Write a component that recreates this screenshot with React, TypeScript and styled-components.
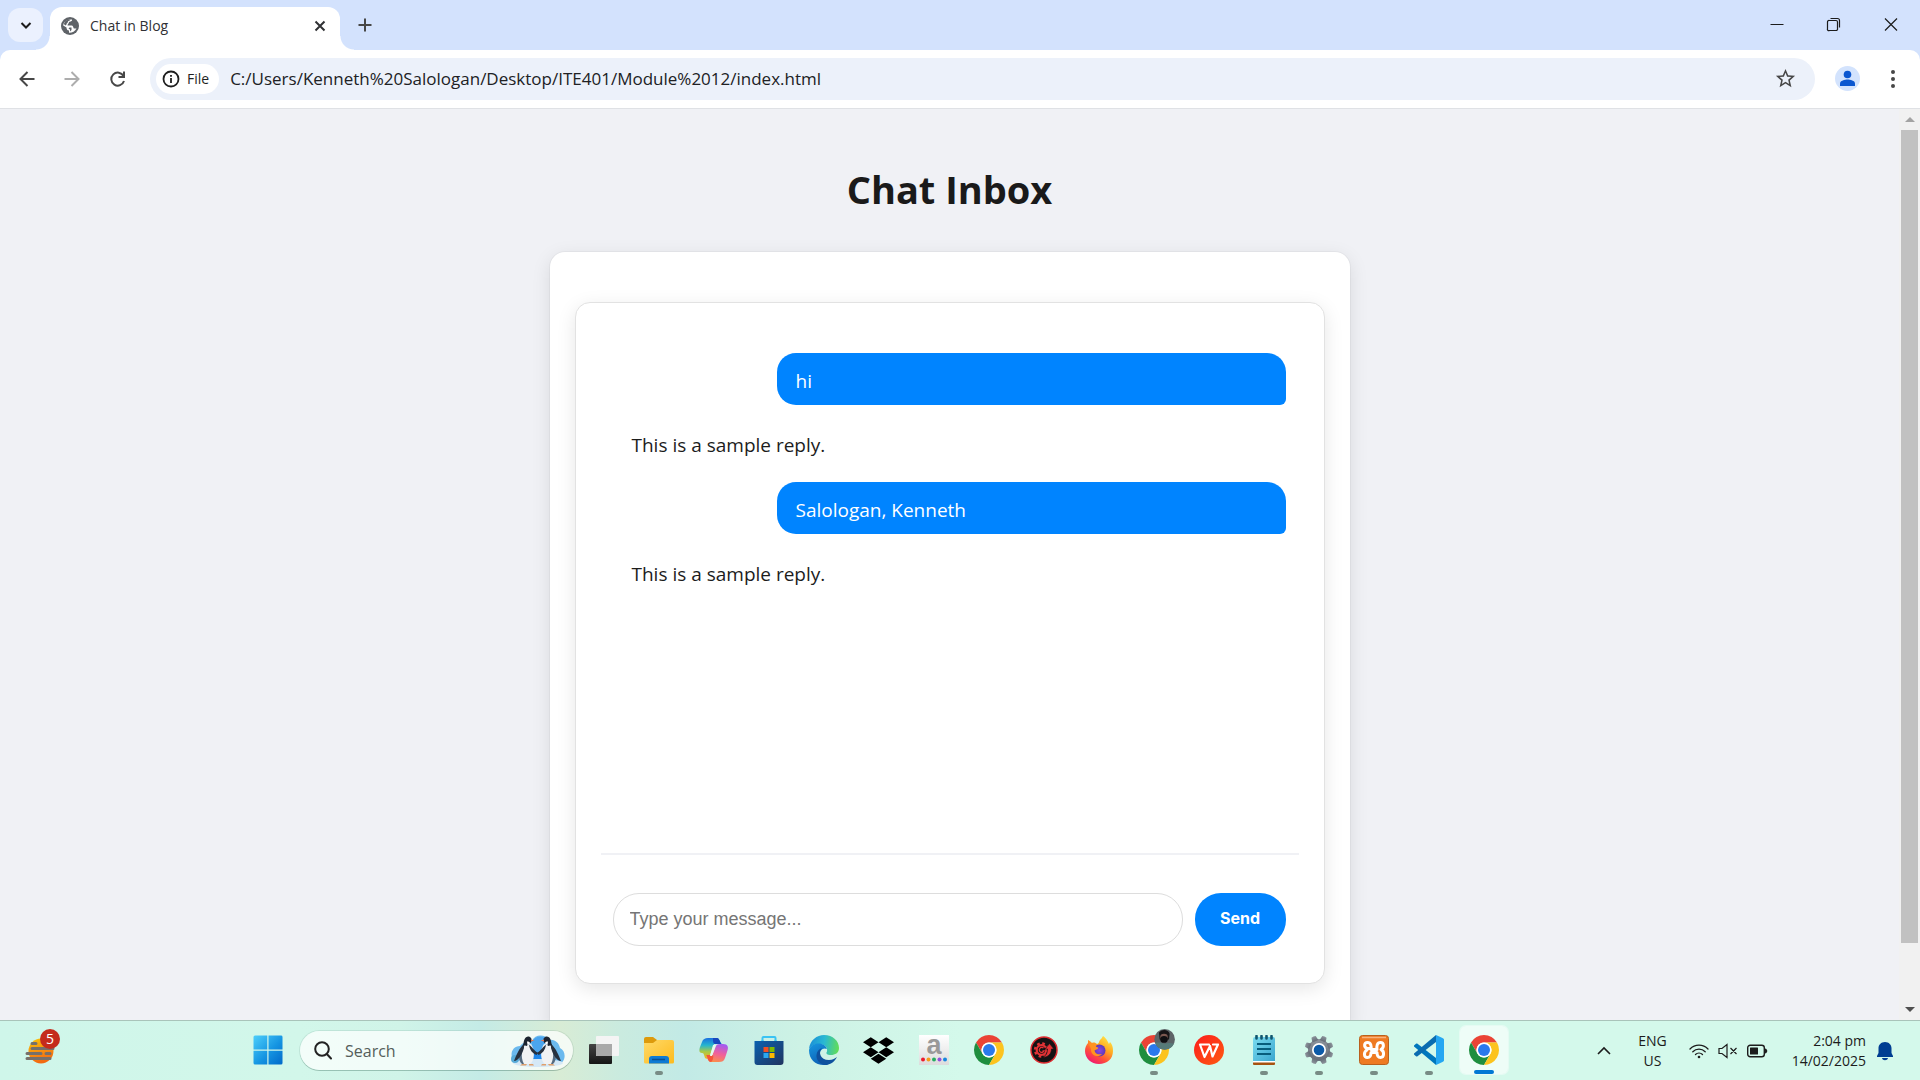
import React from "react";
import styled, { createGlobalStyle, css } from "styled-components";
import { FaDropbox } from "react-icons/fa";

const ui = `"Open Sans", "Noto Sans", sans-serif`;

const GlobalStyle = createGlobalStyle`
  *, *::before, *::after { box-sizing: border-box; }
  body { margin: 0; font-family: ${ui}; color: #1c1c1c; overflow: hidden; }
  button, input { font: inherit; color: inherit; border: 0; padding: 0; margin: 0; background: none; outline: none; }
  svg { display: block; flex: none; }
`;

const Desktop = styled.div`
  display: flex;
  flex-direction: column;
  height: 100vh;
`;

/* ---------- browser frame ---------- */

const TabStrip = styled.header`
  display: flex;
  align-items: flex-end;
  height: 50px;
  flex: none;
  padding-left: 8px;
  background: #d3e2fd;
`;

const TabSearch = styled.button`
  display: grid;
  place-items: center;
  width: 35px;
  height: 34px;
  margin: 0 7px 8px 0;
  border-radius: 12px;
  background: #ebf1fe;
`;

const Tab = styled.div`
  position: relative;
  display: flex;
  align-items: center;
  gap: 11px;
  width: 290px;
  height: 43px;
  padding: 0 12px 6px 11px;
  border-radius: 12px 12px 0 0;
  background: #fff;
  font-size: 14px;
  color: #303134;

  &::before,
  &::after {
    content: "";
    position: absolute;
    bottom: 0;
    width: 14px;
    height: 14px;
  }
  &::before {
    right: 100%;
    background: radial-gradient(circle at 0 0, transparent 13px, #fff 14px);
  }
  &::after {
    left: 100%;
    background: radial-gradient(circle at 100% 0, transparent 13px, #fff 14px);
  }
`;

const TabTitle = styled.span`
  flex: 1;
`;

const IconButton = styled.button<{ $w?: number; $h?: number }>`
  display: grid;
  place-items: center;
  width: ${(p) => p.$w ?? 16}px;
  height: ${(p) => p.$h ?? 16}px;
  flex: none;
`;

const NewTab = styled(IconButton)`
  margin: 0 0 8px 8px;
  color: #474747;
`;

const WindowControls = styled.div`
  display: flex;
  align-self: flex-start;
  margin-left: auto;
  padding-right: 1px;
`;

const ToolbarBack = styled.div`
  flex: none;
  background: #d3e2fd;
`;

const Toolbar = styled.nav`
  display: flex;
  align-items: center;
  height: 59px;
  padding: 0 5px 1px 4px;
  border-bottom: 1px solid #dfe1e5;
  border-radius: 10px 10px 0 0;
  background: #fff;
  color: #474747;
`;

const AddressBar = styled.div`
  display: flex;
  align-items: center;
  flex: 1;
  height: 42px;
  margin: 0 9px;
  padding: 0 8px 0 6px;
  border-radius: 21px;
  background: #ecf1fa;
`;

const FileChip = styled.button`
  display: flex;
  align-items: center;
  gap: 7px;
  height: 30px;
  padding: 0 10px 0 6px;
  border-radius: 15px;
  background: #fff;
  font-size: 14px;
  font-weight: 500;
  color: #1f1f1f;
`;

const AddressInput = styled.input`
  flex: 1;
  min-width: 0;
  padding: 1px 0 0 11px;
  font-size: 17px;
  line-height: 24px;
  color: #202124;
`;

/* ---------- page ---------- */

const Viewport = styled.div`
  display: flex;
  flex: 1;
  min-height: 0;
  background: #f0f1f5;
`;

const Page = styled.main`
  flex: 1;
  overflow: hidden;
  padding: 52px 25px 0;
`;

const Title = styled.h1`
  margin: 0 0 35px;
  font-size: 38px;
  line-height: 56px;
  font-weight: 700;
  text-align: center;
  color: #1a1a1a;
`;

const Card = styled.section`
  max-width: 800px;
  margin: 0 auto;
  padding: 50px 25px;
  border-radius: 15px;
  background: #fff;
  box-shadow: 0 0 0 1px rgba(0, 0, 0, 0.03), 0 5px 19px rgba(0, 0, 0, 0.1);
`;

const ChatBox = styled.div`
  padding: 25px;
  border: 1px solid #e2e2e2;
  border-radius: 15px;
  background: #fff;
  box-shadow: 0 5px 19px rgba(0, 0, 0, 0.1);
`;

const Messages = styled.ol`
  display: flex;
  flex-direction: column;
  gap: 12px;
  height: 525px;
  margin: 0;
  padding: 25px 13px 25px 12px;
  list-style: none;
`;

const Message = styled.li<{ $mine?: boolean }>`
  padding: 15px 19px 12px;
  font-size: 19px;
  line-height: 26px;
  ${(p) =>
    p.$mine &&
    css`
      width: 509px;
      max-width: 100%;
      align-self: flex-end;
      padding-bottom: 11px;
      border-radius: 19px 19px 6px 19px;
      background: #0084ff;
      color: #fff;
    `}
`;

const Composer = styled.form`
  display: flex;
  gap: 12px;
  padding: 38px 13px 12px 12px;
  border-top: 2px solid #f0f1f5;
`;

const MessageInput = styled.input`
  flex: 1;
  min-width: 0;
  height: 53px;
  padding: 0 16px 1px;
  border: 1px solid #ddd;
  border-radius: 26px;
  font-family: "Liberation Sans", Arial, sans-serif;
  font-size: 18px;
  &::placeholder {
    color: #757575;
    opacity: 1;
  }
`;

const SendButton = styled.button`
  width: 91px;
  padding-bottom: 4px;
  border-radius: 26px;
  background: #0084ff;
  font-family: Inter, sans-serif;
  font-size: 16px;
  font-weight: 700;
  color: #fff;
`;

const Scrollbar = styled.div`
  display: flex;
  flex-direction: column;
  align-items: center;
  width: 21px;
  background: #f1f1f1;
`;

const ScrollThumb = styled.div`
  width: 17px;
  flex: 813;
  background: #c1c1c1;
`;

const ScrollRest = styled.div`
  flex: 56;
`;

/* ---------- taskbar ---------- */

const Taskbar = styled.footer`
  display: flex;
  align-items: stretch;
  height: 60px;
  flex: none;
  border-top: 1px solid #a9c4ba;
  background: linear-gradient(
    90deg,
    #cff6ea 0,
    #d2f7ea 300px,
    #d0f4e8 400px,
    #c4ebe6 480px,
    #d8ecd5 560px,
    #caebdf 620px,
    #c2eae6 685px,
    #cdf2e5 800px,
    #d4f9eb 960px
  );
`;

const Widgets = styled.button`
  position: relative;
  width: 240px;
  padding-left: 25px;
`;

const Badge = styled.span`
  position: absolute;
  left: 40px;
  top: 8px;
  width: 20px;
  height: 20px;
  border-radius: 50%;
  background: #c42b1c;
  font-size: 14px;
  line-height: 20px;
  text-align: center;
  color: #fff;
`;

const SearchBox = styled.label`
  display: flex;
  align-items: center;
  align-self: center;
  gap: 13px;
  width: 273px;
  height: 39px;
  margin: 0 3px 0 5px;
  padding: 0 8px 0 14px;
  border-radius: 20px;
  background: rgba(255, 255, 255, 0.72);
  box-shadow: 0 0 0 1px rgba(0, 60, 40, 0.09), 0 1px 0 rgba(0, 60, 40, 0.2);
`;

const SearchInput = styled.input`
  flex: 1;
  min-width: 0;
  font-size: 16px;
  line-height: 24px;
  &::placeholder {
    color: #555e5b;
    opacity: 1;
  }
`;

const AppButton = styled.button<{ $state?: "open" | "active" }>`
  position: relative;
  display: grid;
  place-items: center;
  width: 55px;
  flex: none;
  padding-bottom: 1px;

  ${(p) =>
    p.$state === "active" &&
    css`
      margin: 5px 3px 6px 4px;
      width: 48px;
      padding: 0 0 1px;
      border-radius: 6px;
      background: rgba(255, 255, 255, 0.6);
      box-shadow: 0 0 0 1px rgba(255, 255, 255, 0.4);
    `}

  ${(p) =>
    p.$state &&
    css`
      &::after {
        content: "";
        position: absolute;
        left: 50%;
        bottom: ${p.$state === "active" ? 0 : 5}px;
        width: ${p.$state === "active" ? 20 : 8}px;
        height: 4px;
        border-radius: 2px;
        transform: translateX(-50%);
        background: ${p.$state === "active" ? "#0078d4" : "#788c85"};
      }
    `}
`;

const Tray = styled.div`
  display: flex;
  align-items: center;
  margin-left: auto;
  padding-right: 26px;
`;

const TrayText = styled.button<{ $align: string }>`
  display: flex;
  flex-direction: column;
  font-size: 14px;
  line-height: 20px;

  span {
    width: 100%;
    text-align: ${(p) => p.$align};
  }
`;

const StatusButton = styled.button`
  display: flex;
  align-items: center;
  gap: 9px;
  margin: 0 24px 0 22px;
`;

const LanguageButton = styled(TrayText)`
  margin-left: 26px;
`;

const ClockButton = styled(TrayText)`
  margin-right: 10px;
`;

/* ---------- drawings ---------- */

const Chrome = ({ photo }: { photo?: boolean }) => (
  <svg width="30" height="30" viewBox="0 0 48 48" overflow="visible">
    <path fill="#ea4335" d="M24 12H44.78A24 24 0 0 0 3.22 12L13.6 30A12 12 0 0 1 24 12Z" />
    <path fill="#1e8e3e" d="M3.22 12A24 24 0 0 0 24 48L34.4 30A12 12 0 0 1 13.6 30Z" />
    <path fill="#fcc31e" d="M24 48A24 24 0 0 0 44.78 12H24A12 12 0 0 1 34.4 30Z" />
    <circle cx="24" cy="24" r="12" fill="#fff" />
    <circle cx="24" cy="24" r="9.6" fill="#2a79ec" />
    {photo && (
      <g>
        <circle cx="41" cy="7" r="16.5" fill="#5d6467" />
        <path d="M26 13C33 11 36 13 41 14C47 12 50 13 56 14A16.5 16.5 0 0 1 26 13Z" fill="#567a78" />
        <path d="M32-4C37-10 47-9 49-2L48 7H33Z" fill="#171416" />
        <ellipse cx="40" cy="3" rx="6" ry="5" fill="#7c5850" />
        <ellipse cx="40" cy="7" rx="6" ry="5.5" fill="#100f12" />
      </g>
    )}
  </svg>
);

const Weather = () => (
  <svg width="32" height="34" viewBox="0 0 32 34">
    <defs>
      <linearGradient id="sun" x1="0" y1="0" x2="0.3" y2="1">
        <stop offset="0" stopColor="#fdc50a" />
        <stop offset="1" stopColor="#f26a12" />
      </linearGradient>
    </defs>
    <circle cx="16" cy="17" r="12.5" fill="url(#sun)" />
    <path
      d="M7 9.500H11M7 14.500H28M2 19.500H16M21 19.500H25M2 24.500H25"
      stroke="#76706a"
      strokeWidth="3"
      strokeLinecap="round"
    />
  </svg>
);

const Windows = () => (
  <svg width="30" height="30" viewBox="0 0 30 30">
    <defs>
      <linearGradient id="win" gradientUnits="userSpaceOnUse" x1="0" y1="0" x2="30" y2="30">
        <stop offset="0" stopColor="#4fd0fb" />
        <stop offset="0.55" stopColor="#1595e2" />
        <stop offset="1" stopColor="#0067c8" />
      </linearGradient>
    </defs>
    <path fill="url(#win)" d="M2 .5H14.300V14.500H.5V2A1.500 1.500 0 0 1 2 .5ZM15.500.5H28A1.500 1.500 0 0 1 29.500 2V14.500H15.500ZM.5 15.700H14.300V29.500H2A1.500 1.500 0 0 1 .5 28ZM15.500 15.700H29.500V28A1.500 1.500 0 0 1 28 29.500H15.500Z" />
  </svg>
);

const Penguin = () => (
  <g>
    <path d="M11 29L9 30.500H15L16 29ZM18 29L18 30.500H23L22 29Z" fill="#e0a06c" />
    <path d="M13 10C9 13 7 24 11 29H19C24 26 24 14 20 9Z" fill="#f1f2f3" />
    <path d="M15 9C11 12 9 22 13 29H11C6 25 8 13 13 9Z" fill="#566b80" />
    <path d="M13 9C8 13 5 21 3 26C7 26 11 20 13 13Z" fill="#27313f" />
    <path d="M18 10C21 11 23 16 27 18L25.500 20C21 18 19 15 18 10Z" fill="#27313f" />
    <path d="M12 10C13 8 12.500 2 17 1.500C20 1.500 21 4 20.500 6C20 9 17 8 16 11Z" fill="#1c2430" />
    <path d="M16 6.500C18 6.500 19 7 19 8.500L16.500 10Z" fill="#fff" />
    <path d="M20 4.500L23.500 5.500L20 6.500Z" fill="#e5744f" />
  </g>
);

const Penguins = () => (
  <svg width="54" height="32" viewBox="0 0 54 32">
    <path d="M3 27C-2 20 1 11 9 11C12 7 17 6 21 6C24-1 34-1 38 5C44 4 48 8 49 13C55 16 55 25 50 28Z" fill="#6bb9ee" />
    <path d="M21 7C24 0 34 0 38 7L34 23H20Z" fill="#4ba5ee" />
    <path d="M22 17H33V24H21Z" fill="#1f86ea" />
    <ellipse cx="27" cy="28" rx="25" ry="4" fill="#d5e8f6" />
    <ellipse cx="4" cy="24" rx="4" ry="4" fill="#58abd9" />
    <Penguin />
    <g transform="translate(53 0) scale(-1 1)">
      <Penguin />
    </g>
  </svg>
);

const TaskView = () => (
  <svg width="30" height="30" viewBox="0 0 30 30">
    <defs>
      <linearGradient id="tvDark" x1="0" y1="0" x2="0" y2="1">
        <stop offset="0" stopColor="#444" />
        <stop offset="1" stopColor="#151515" />
      </linearGradient>
    </defs>
    <rect x="0" y="9" width="23" height="20" rx="1" fill="url(#tvDark)" />
    <rect x="7" y="1" width="23" height="20" rx="1" fill="#f4f4f4" />
    <path d="M7 9H23V21H8A1 1 0 0 1 7 20Z" fill="#a9a9a9" />
  </svg>
);

const Explorer = () => (
  <svg width="30" height="30" viewBox="0 0 30 30">
    <defs>
      <linearGradient id="folder" x1="0" y1="0" x2="1" y2="1">
        <stop offset="0" stopColor="#ffd968" />
        <stop offset="1" stopColor="#fdbb1d" />
      </linearGradient>
    </defs>
    <path d="M0 4A2 2 0 0 1 2 2H9L13 5V10H0Z" fill="#dd9a0c" />
    <path d="M0 8H9L13 5H28A2 2 0 0 1 30 7V27A1.500 1.500 0 0 1 28.500 28.500H1.500A1.500 1.500 0 0 1 0 27Z" fill="url(#folder)" />
    <path d="M5 28.500V24A3 3 0 0 1 8 21H22A3 3 0 0 1 25 24V28.500Z" fill="#0f7bd4" />
    <path d="M8 24.500H21" stroke="#0a4f92" strokeWidth="1.500" />
  </svg>
);

const Copilot = () => (
  <svg width="30" height="30" viewBox="0 0 30 30">
    <defs>
      <linearGradient id="cpA" x1="0" y1="0" x2="0" y2="1">
        <stop offset="0" stopColor="#1a6fe0" />
        <stop offset="0.35" stopColor="#25b5cf" />
        <stop offset="0.65" stopColor="#a6c94a" />
        <stop offset="1" stopColor="#f4b51f" />
      </linearGradient>
      <linearGradient id="cpB" x1="0.6" y1="0" x2="0.3" y2="1">
        <stop offset="0" stopColor="#a45cf0" />
        <stop offset="0.5" stopColor="#f0609b" />
        <stop offset="1" stopColor="#fb9147" />
      </linearGradient>
    </defs>
    <path d="M14 3H18C21 3 21 9 23 9H15L11 20C10 23 8 25 6 23C5 20 5 18 3 18C0 18 0 15 1 12L3 7C4 4 6 3 9 3Z" fill="url(#cpA)" />
    <path d="M14 3H18C21 3 21 9 23 9H16C14 9 14 6 14 3Z" fill="#1748be" />
    <path d="M16 27H12C9 27 8 21 7 21H13L17 11C18 9 20 9 24 9C29 9 30 12 28 17L26 23C25 26 23 27 20 27Z" fill="url(#cpB)" />
    <path d="M7 20H14C15 23 13 27 12 27C8 27 9 21 7 20Z" fill="#f5553a" />
    <path d="M14 10H17L13 21H11Z" fill="#e8f8ef" />
  </svg>
);

const Store = () => (
  <svg width="30" height="30" viewBox="0 0 30 30">
    <defs>
      <linearGradient id="bag" x1="0" y1="0" x2="1" y2="1">
        <stop offset="0" stopColor="#0a61b0" />
        <stop offset="1" stopColor="#21345f" />
      </linearGradient>
    </defs>
    <path d="M8.500 7V3A1 1 0 0 1 9.500 2H20.500A1 1 0 0 1 21.500 3V7" fill="none" stroke="#3ac3f3" strokeWidth="2" />
    <path d="M.5 6H29.500V27A3 3 0 0 1 26.500 30H3.500A3 3 0 0 1 .5 27Z" fill="url(#bag)" />
    <path d="M9.500 12H14.500V17H9.500Z" fill="#f25022" />
    <path d="M15.500 12H20.500V17H15.500Z" fill="#7fba00" />
    <path d="M9.500 18H14.500V23H9.500Z" fill="#2aa7f0" />
    <path d="M15.500 18H20.500V23H15.500Z" fill="#ffb900" />
    <path d="M8.500 6V5M21.500 6V5" stroke="#3ac3f3" strokeWidth="2" />
  </svg>
);

const Edge = () => (
  <svg width="30" height="30" viewBox="0 0 30 30">
    <defs>
      <linearGradient id="edTop" x1="0" y1="0.400" x2="1" y2="0.500">
        <stop offset="0" stopColor="#1b8fd8" />
        <stop offset="0.5" stopColor="#2ab9d2" />
        <stop offset="1" stopColor="#62dd58" />
      </linearGradient>
      <linearGradient id="edMid" x1="0" y1="0" x2="0.500" y2="1">
        <stop offset="0" stopColor="#1797e0" />
        <stop offset="1" stopColor="#0d5fb4" />
      </linearGradient>
    </defs>
    <path d="M0 14C1 5 8 0 15 0C24 0 30 6 30 13C30 18 26 20 22 20C18 20 16.500 18.500 18 16.500C19 12 15 9 10 9C5 9 1 12 0 14Z" fill="url(#edTop)" />
    <path d="M0 15C1 11 5 8.500 9.500 8.500C14 8.500 17.500 11 17.800 14C14 12 10 16 11 20C12 26 18 28 23 27C20 29.500 17 30 15 30C6 30 0 24 0 15Z" fill="url(#edMid)" />
    <path d="M13 13C9 17 11 25 20 25C24 25 26 23 28 22C25 28 20 30 16 30C10 29 7 24 7.500 20C8 16 10 14 13 13Z" fill="#0f519e" />
  </svg>
);

const LetterTile = () => (
  <svg width="30" height="30" viewBox="0 0 30 30" overflow="visible">
    <defs>
      <linearGradient id="tile" x1="0" y1="0" x2="0" y2="1">
        <stop offset="0" stopColor="#fff" />
        <stop offset="1" stopColor="#dcdcdc" />
      </linearGradient>
    </defs>
    <rect width="30" height="30" fill="url(#tile)" />
    <text x="15" y="19" textAnchor="middle" fontFamily="Liberation Sans, Arial, sans-serif" fontWeight="700" fontSize="27" fill="#999">
      a
    </text>
    {["#ec1b2e", "#f59c1c", "#25ad62", "#9250da", "#1688dd"].map((c, i) => (
      <circle key={c} cx={4 + i * 5.5} cy="24.500" r="2" fill={c} />
    ))}
  </svg>
);

const GearArrow = () => (
  <svg width="30" height="30" viewBox="0 0 30 30">
    <circle cx="15" cy="15" r="13" fill="#151314" stroke="#de2c30" strokeWidth="1.500" />
    <circle cx="12.500" cy="15" r="4.800" fill="none" stroke="#e23336" strokeWidth="2.200" />
    <circle cx="12.500" cy="15" r="6.500" fill="none" stroke="#e23336" strokeWidth="2.400" strokeDasharray="2.600 2.500" />
    <path d="M14.500 13A2.500 2.500 0 1 0 15 16H13.500" fill="none" stroke="#e23336" strokeWidth="1.300" />
    <path d="M16 14L20.500 8.500L25 14H22.500C22.500 19 19 22 14 22.500C17 20.500 18.500 18 18.500 14Z" fill="#e23336" stroke="#151314" strokeWidth="0.700" />
  </svg>
);

const Firefox = () => (
  <svg width="30" height="30" viewBox="0 0 30 30">
    <defs>
      <linearGradient id="ffx" x1="0.900" y1="0" x2="0.250" y2="1">
        <stop offset="0" stopColor="#fff14f" />
        <stop offset="0.400" stopColor="#ffaa22" />
        <stop offset="0.700" stopColor="#ff5039" />
        <stop offset="1" stopColor="#ee1478" />
      </linearGradient>
      <radialGradient id="ffCore">
        <stop offset="0" stopColor="#8a48e8" />
        <stop offset="1" stopColor="#5c38b5" />
      </radialGradient>
    </defs>
    <path d="M19 1C23 4 24 7 25 9L26 7C29 10 29 14 29 16C29 24 23 29 15 29C7 29 1 23 1 16C1 13 2 10 4 8L4 5C6 6 7 7 8 8C10 7 12 8 13 9C15 9 15 6 16 5C17 4 18 3 19 1Z" fill="url(#ffx)" />
    <circle cx="15.500" cy="15.500" r="6" fill="url(#ffCore)" />
    <path d="M5 9C8 8 10 8 13 9.500C11 11 12 12 14 12.500C15 14 12 14.500 10.500 15.500C11 19 15 20 18 19C15 23 7 21 7 15C7 13 6 12 5 9Z" fill="#ff9420" />
  </svg>
);

const Wps = () => (
  <svg width="30" height="30" viewBox="0 0 30 30">
    <defs>
      <linearGradient id="wps" x1="0" y1="0" x2="1" y2="1">
        <stop offset="0" stopColor="#fb1c1c" />
        <stop offset="1" stopColor="#ff5b12" />
      </linearGradient>
    </defs>
    <circle cx="15" cy="15" r="15" fill="url(#wps)" />
    <path d="M15 9.500H6L10.500 22L16 11L18.500 21.500L24 9.500H19" fill="none" stroke="#fff" strokeWidth="2.200" strokeLinejoin="round" strokeLinecap="round" />
  </svg>
);

const Notepad = () => (
  <svg width="30" height="30" viewBox="0 0 30 30">
    <defs>
      <linearGradient id="note" x1="0" y1="0" x2="1" y2="1">
        <stop offset="0" stopColor="#7bdcf0" />
        <stop offset="1" stopColor="#3aa6cf" />
      </linearGradient>
    </defs>
    <path d="M4 25H26V29A1 1 0 0 1 25 30H5A1 1 0 0 1 4 29Z" fill="#a65310" />
    <path d="M4 26H26V27.500H4Z" fill="#fff" />
    <path d="M4 4A2 2 0 0 1 6 2H24A2 2 0 0 1 26 4V26H4Z" fill="url(#note)" />
    <path d="M8 9H22M8 14H22M8 19H22" stroke="#085d7c" strokeWidth="1.800" />
    <path d="M7.500 1V3.500M12.500 1V3.500M17.500 1V3.500M22.500 1V3.500" stroke="#10566e" strokeWidth="2.600" strokeLinecap="round" />
  </svg>
);

const Settings = () => (
  <svg width="30" height="30" viewBox="0 0 30 30">
    <defs>
      <linearGradient id="gear" x1="0" y1="0" x2="0" y2="1">
        <stop offset="0" stopColor="#8d949c" />
        <stop offset="1" stopColor="#666e78" />
      </linearGradient>
    </defs>
    <g fill="url(#gear)">
      <circle cx="15" cy="15" r="11" />
      {[0, 45, 90, 135, 180, 225, 270, 315].map((a) => (
        <path key={a} d="M11.800 5.500L12.700 .8Q15 0 17.300 .8L18.200 5.500Z" transform={`rotate(${a + 22.5} 15 15)`} />
      ))}
    </g>
    <circle cx="15" cy="15" r="7" fill="#fff" />
    <circle cx="15" cy="15" r="5.300" fill="#0c5aa8" />
  </svg>
);

const Xampp = () => (
  <svg width="30" height="30" viewBox="0 0 30 30">
    <rect x="0.500" y="0.500" width="29" height="29" rx="3" fill="#ee7a22" stroke="#b9601d" />
    <path d="M3 2.500H27" stroke="#f7b27d" strokeWidth="1.500" />
    <path
      d="M12 13.500H8C4.500 12 5 7.500 8.500 7.500C12 7.500 12.500 11 12 14.500H18C17.500 11 18 7.500 21.500 7.500C25 7.500 25.500 12 22 14.500C25.500 16 25.500 22.500 21.500 22.500C18 22.500 18 19 18 17.500H12C12 19 12 22.500 8.500 22.500C4.500 22.500 4.500 17 8 15"
      fill="none"
      stroke="#fff"
      strokeWidth="3"
      strokeLinecap="round"
      strokeLinejoin="round"
    />
  </svg>
);

const VsCode = () => (
  <svg width="30" height="30" viewBox="0 0 30 30">
    <path d="M0 10.500L2 8.700C2.500 8.400 3 8.400 3.500 8.700L22 23V30L0 11.500Z" fill="#0077bd" />
    <path d="M0 19.500L2 21.300C2.500 21.600 3 21.600 3.500 21.300L22 7V0L0 18.500Z" fill="#0a6cb0" />
    <path d="M22 0L28.500 3C29.500 3.500 30 4 30 5V25C30 26 29.500 26.500 28.500 27L22 30V0Z" fill="#25a7f2" />
  </svg>
);

const Globe = () => (
  <svg width="18" height="18" viewBox="0 0 18 18">
    <circle cx="9" cy="9" r="9" fill="#5f6368" />
    <path
      d="M11 2.500C11.500 4.500 9 4.500 8 5C8 7 6.500 6.500 6.500 8.500H10.500C12.500 8.500 12 11 13 11.500H15.500C14 14.500 11 16 8 15.800V13.500C6 13.500 5.500 12 5.500 10.500L2.200 8.500C2.500 4.500 6.500 2 11 2.500Z"
      fill="#fff"
    />
    <path d="M4 4.500C6 2.500 8 2.300 9.500 2.500C9 4 7.500 3.800 7 4.500C7 6 5.500 6 5.500 7.500L4.500 8.500L2.800 7ZM8.500 10.500H10.500V13L9 14.500V12.500L7.500 11.500Z" fill="#5f6368" />
  </svg>
);

const Line = ({ d, size = 16, w = 2 }: { d: string; size?: number; w?: number }) => (
  <svg width={size} height={size} viewBox={`0 0 ${size} ${size}`} fill="none" stroke="currentColor" strokeWidth={w}>
    <path d={d} />
  </svg>
);

const Wifi = () => (
  <svg width="20" height="16" viewBox="0 0 20 16" fill="none" stroke="currentColor" strokeWidth="1.300" strokeLinecap="round">
    <path d="M1 6A12.500 12.500 0 0 1 19 6M3.800 8.800A8.700 8.700 0 0 1 16.200 8.800M6.500 11.500A5 5 0 0 1 13.500 11.500" />
    <circle cx="10" cy="14" r="1.300" fill="currentColor" stroke="none" />
  </svg>
);

const Muted = () => (
  <svg width="20" height="16" viewBox="0 0 20 16" fill="none" stroke="currentColor" strokeWidth="1.200">
    <path d="M1 5.500H4L9 1.500V14.500L4 10.500H1ZM12.500 5L18.500 11M18.500 5L12.500 11" />
  </svg>
);

const Battery = () => (
  <svg width="21" height="14" viewBox="0 0 21 14">
    <rect x="0.700" y="1.200" width="16.600" height="11.600" rx="2.500" fill="none" stroke="currentColor" strokeWidth="1.400" />
    <rect x="3" y="3.500" width="8" height="7" rx="0.500" fill="currentColor" />
    <path d="M18 4.500C21 5 21 9 18 9.500Z" fill="currentColor" />
  </svg>
);

const Bell = () => (
  <svg width="18" height="20" viewBox="0 0 18 20" fill="#003e92">
    <path d="M9 1C13 1 15.500 4 15.500 7V12L17 15V16H1V15L2.500 12V7C2.500 4 5 1 9 1ZM6 17H12C11.500 20 6.500 20 6 17Z" />
  </svg>
);

const apps: { name: string; icon: React.ReactNode; state?: "open" | "active" }[] = [
  { name: "Task View", icon: <TaskView /> },
  { name: "File Explorer", icon: <Explorer />, state: "open" },
  { name: "Copilot", icon: <Copilot /> },
  { name: "Microsoft Store", icon: <Store /> },
  { name: "Microsoft Edge", icon: <Edge /> },
  { name: "Dropbox", icon: <FaDropbox size={31} color="#000" /> },
  { name: "Amazon", icon: <LetterTile /> },
  { name: "Chrome", icon: <Chrome /> },
  { name: "Driver Updater", icon: <GearArrow /> },
  { name: "Firefox", icon: <Firefox /> },
  { name: "Chrome profile", icon: <Chrome photo />, state: "open" },
  { name: "WPS Office", icon: <Wps /> },
  { name: "Notepad", icon: <Notepad />, state: "open" },
  { name: "Settings", icon: <Settings />, state: "open" },
  { name: "XAMPP", icon: <Xampp />, state: "open" },
  { name: "Visual Studio Code", icon: <VsCode />, state: "open" },
  { name: "Chrome window", icon: <Chrome />, state: "active" },
];

const messages = [
  { text: "hi", mine: true },
  { text: "This is a sample reply." },
  { text: "Salologan, Kenneth", mine: true },
  { text: "This is a sample reply." },
];

export default function App() {
  return (
    <Desktop>
      <GlobalStyle />
      <TabStrip>
        <TabSearch aria-label="Search tabs">
          <Line d="M3.500 6L8 10.500L12.500 6" />
        </TabSearch>
        <Tab>
          <Globe />
          <TabTitle>Chat in Blog</TabTitle>
          <IconButton aria-label="Close tab">
            <Line d="M3.500 3.500L12.500 12.500M12.500 3.500L3.500 12.500" />
          </IconButton>
        </Tab>
        <NewTab aria-label="New tab" $w={34} $h={34}>
          <Line d="M8 1.500V14.500M1.500 8H14.500" />
        </NewTab>
        <WindowControls>
          <IconButton aria-label="Minimize" $w={57} $h={48}>
            <Line d="M1.500 8.500H14.500" w={1} />
          </IconButton>
          <IconButton aria-label="Restore" $w={57} $h={48}>
            <Line d="M3.500 4.500H10A1.500 1.500 0 0 1 11.500 6V12.500A1.500 1.500 0 0 1 10 14.500H3.500A1.500 1.500 0 0 1 1.500 12.500V6A1.500 1.500 0 0 1 3.500 4.500ZM4.500 2.500H11.500A2 2 0 0 1 13.500 4.500V11.500" w={1.2} />
          </IconButton>
          <IconButton aria-label="Close" $w={57} $h={48}>
            <Line d="M2 2.500L14 14.500M14 2.500L2 14.500" w={1.2} />
          </IconButton>
        </WindowControls>
      </TabStrip>

      <ToolbarBack>
        <Toolbar>
          <IconButton aria-label="Back" $w={46} $h={42}>
            <Line d="M16.500 9H3M9.500 2L2.500 9L9.500 16" size={18} />
          </IconButton>
          <IconButton aria-label="Forward" $w={44} $h={42} disabled>
            <svg width="18" height="18" viewBox="0 0 18 18" fill="none" stroke="#adadad" strokeWidth="2">
              <path d="M1.500 9H15M8.500 2L15.500 9L8.500 16" />
            </svg>
          </IconButton>
          <IconButton aria-label="Reload" $w={47} $h={42}>
            <Line d="M14.500 6A6.500 6.500 0 1 0 15 11M15 1.500V7H9.500" size={18} />
          </IconButton>
          <AddressBar>
            <FileChip>
              <Line d="M9 1.500A7.500 7.500 0 1 1 9 16.500A7.500 7.500 0 1 1 9 1.500ZM9 8V13M9 5V6.800" size={18} w={1.8} />
              File
            </FileChip>
            <AddressInput
              aria-label="Address"
              defaultValue="C:/Users/Kenneth%20Salologan/Desktop/ITE401/Module%2012/index.html"
            />
            <IconButton aria-label="Bookmark this page" $w={44} $h={38}>
              <svg width="23" height="23" viewBox="0 0 24 24" fill="#474747">
                <path d="M22 9.240L14.810 8.620L12 2L9.190 8.630L2 9.240L7.460 13.970L5.820 21L12 17.270L18.180 21L16.550 13.970L22 9.240ZM12 15.400L8.240 17.670L9.240 13.390L5.920 10.510L10.300 10.130L12 6.100L13.710 10.140L18.090 10.520L14.770 13.400L15.770 17.680L12 15.400Z" />
              </svg>
            </IconButton>
          </AddressBar>
          <IconButton aria-label="Profile" $w={46} $h={42}>
            <svg width="25" height="25" viewBox="0 0 25 25">
              <circle cx="12.500" cy="12.500" r="12.500" fill="#d3e3fd" />
              <circle cx="12.500" cy="8.500" r="3.800" fill="#0b57d0" />
              <path d="M5 20V17.500C5 14.500 10 13.500 12.500 13.500S20 14.500 20 17.500V20Z" fill="#0b57d0" />
            </svg>
          </IconButton>
          <IconButton aria-label="Menu" $w={45} $h={42}>
            <svg width="4" height="18" viewBox="0 0 4 18" fill="#474747">
              <circle cx="2" cy="2" r="2" />
              <circle cx="2" cy="9" r="2" />
              <circle cx="2" cy="16" r="2" />
            </svg>
          </IconButton>
        </Toolbar>
      </ToolbarBack>

      <Viewport>
        <Page>
          <Title>Chat Inbox</Title>
          <Card>
            <ChatBox>
              <Messages>
                {messages.map((m, i) => (
                  <Message key={i} $mine={m.mine}>
                    {m.text}
                  </Message>
                ))}
              </Messages>
              <Composer onSubmit={(e) => e.preventDefault()}>
                <MessageInput aria-label="Message" placeholder="Type your message..." />
                <SendButton>Send</SendButton>
              </Composer>
            </ChatBox>
          </Card>
        </Page>
        <Scrollbar>
          <IconButton aria-label="Scroll up" $w={21} $h={21}>
            <svg width="10" height="5" viewBox="0 0 10 5"><path d="M0 5L5 0L10 5Z" fill="#a3a3a3" /></svg>
          </IconButton>
          <ScrollThumb />
          <ScrollRest />
          <IconButton aria-label="Scroll down" $w={21} $h={21}>
            <svg width="10" height="5" viewBox="0 0 10 5"><path d="M0 0H10L5 5Z" fill="#505050" /></svg>
          </IconButton>
        </Scrollbar>
      </Viewport>

      <Taskbar>
        <Widgets aria-label="Widgets">
          <Weather />
          <Badge>5</Badge>
        </Widgets>
        <AppButton aria-label="Start"><Windows /></AppButton>
        <SearchBox>
          <svg width="18" height="19" viewBox="0 0 18 19" fill="none" stroke="#222" strokeWidth="2" strokeLinecap="round">
            <circle cx="8" cy="8" r="6.800" />
            <path d="M12.800 13L17 17.500" />
          </svg>
          <SearchInput aria-label="Search" placeholder="Search" />
          <Penguins />
        </SearchBox>
        {apps.map((a) => (
          <AppButton key={a.name} aria-label={a.name} $state={a.state}>
            {a.icon}
          </AppButton>
        ))}
        <Tray>
          <IconButton aria-label="Hidden icons">
            <Line d="M2 11L8 5L14 11" w={1.6} />
          </IconButton>
          <LanguageButton $align="center">
            <span>ENG</span>
            <span>US</span>
          </LanguageButton>
          <StatusButton aria-label="Network, sound, battery">
            <Wifi />
            <Muted />
            <Battery />
          </StatusButton>
          <ClockButton $align="right">
            <span>2:04 pm</span>
            <span>14/02/2025</span>
          </ClockButton>
          <IconButton aria-label="Notifications" $w={18} $h={20}>
            <Bell />
          </IconButton>
        </Tray>
      </Taskbar>
    </Desktop>
  );
}
